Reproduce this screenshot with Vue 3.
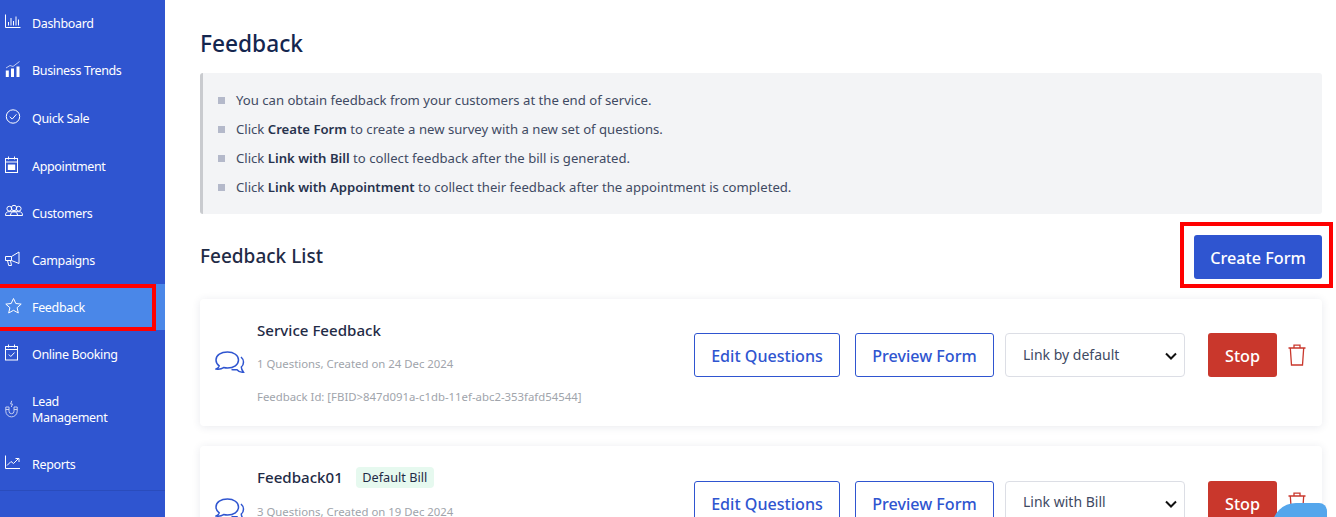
<script setup>
const nav = [
  { label: 'Dashboard', icon: 'dash', h: 47 },
  { label: 'Business Trends', icon: 'trend', h: 47 },
  { label: 'Quick Sale', icon: 'check', h: 49 },
  { label: 'Appointment', icon: 'cal', h: 47 },
  { label: 'Customers', icon: 'users', h: 47 },
  { label: 'Campaigns', icon: 'horn', h: 47 },
  { label: 'Feedback', icon: 'star', h: 46, active: true },
  { label: 'Online Booking', icon: 'book', h: 49 },
  { label: 'Lead Management', icon: 'magnet', h: 62 },
  { label: 'Reports', icon: 'report', h: 47 }
]
const forms = [
  { title: 'Service Feedback', meta: '1 Questions, Created on 24 Dec 2024', id: 'Feedback Id: [FBID>847d091a-c1db-11ef-abc2-353fafd54544]', link: 'Link by default' },
  { title: 'Feedback01', badge: 'Default Bill', meta: '3 Questions, Created on 19 Dec 2024', id: 'Feedback Id: [FBID>5a1d7e20-bd7a-11ef-9c41-353fafd54544]', link: 'Link with Bill' }
]
</script>

<template>
  <div class="page">
    <aside class="side">
      <div v-for="n in nav" :key="n.label" class="item" :class="{ active: n.active }" :style="{ height: n.h + 'px' }">
        <svg class="nicon" viewBox="0 0 18 18" fill="none" stroke="currentColor" stroke-width="1">
          <template v-if="n.icon === 'dash'">
            <path d="M.5 1.500V14.500H15.500" />
            <path d="M3.500 12.500V9M6 12.500V5M8.500 12.500V8M11 12.500V3.500M13.500 12.500V6.500" />
          </template>
          <template v-else-if="n.icon === 'trend'">
            <path d="M1 8 5 5.500l3 1 6.500-5" stroke-width=".7" />
            <path d="M.8 10.500h3V17h-3zM6 8.500h3V17H6zM11.500 6.500h3V17h-3z" fill="currentColor" stroke="none" />
          </template>
          <template v-else-if="n.icon === 'check'">
            <circle cx="8" cy="8.500" r="6.700" />
            <path d="M4.800 8.700 7.200 11.100 11.400 6.300" />
          </template>
          <template v-else-if="n.icon === 'cal'">
            <rect x=".5" y="2.500" width="12" height="14" />
            <path d="M.5 6h12M3.500 .5v3M9.500 .5v3" />
            <path d="M2.800 8.500h7.400v5.500H2.800z" fill="currentColor" stroke="none" />
          </template>
          <template v-else-if="n.icon === 'users'">
            <circle cx="9" cy="5" r="2.700" />
            <circle cx="4.300" cy="5.700" r="2.400" />
            <circle cx="13.700" cy="5.700" r="2.400" />
            <path d="M.5 12.500c0-2.800 1.200-3.800 3.500-3.800h10c2.300 0 3.500 1 3.500 3.800zM5.500 12.500c0-2.300 1.200-3.800 3.500-3.800s3.500 1.500 3.500 3.800" />
          </template>
          <template v-else-if="n.icon === 'horn'">
            <path d="M.5 6.500h6L14 2v11.500L6.500 10.500h-6zM6.500 6.500v4M2.500 10.500l1.200 5H6.500l-1-5" />
          </template>
          <template v-else-if="n.icon === 'star'">
            <path d="M8.500 1.500 10.800 6.500 16.200 7.100 12.100 10.700 13.300 16 8.500 13.300 3.700 16 4.900 10.700 .8 7.100 6.200 6.500Z" />
          </template>
          <template v-else-if="n.icon === 'book'">
            <rect x=".5" y="2.500" width="12" height="13.500" />
            <path d="M.5 5.500h12M3.500 .5v3M9.500 .5v3M3.800 10.500l2 2 3.800-4" />
          </template>
          <template v-else-if="n.icon === 'magnet'">
            <g opacity=".72">
              <path d="M.8 7v4.200a5.700 5.700 0 0 0 11.400 0V7H9v4.200a2.500 2.500 0 0 1-5 0V7zM.8 9.500H4M9 9.500h3.200" />
              <path d="M6.800 .8 5.600 4H7.500L6.300 7" />
            </g>
          </template>
          <template v-else>
            <path d="M.5 1.500V14.500H15" />
            <path d="M2 11.500 6 7.500l2.500 2 5-5M10.500 4.500h3.500V8" />
          </template>
        </svg>
        <span class="nlabel">{{ n.label }}</span>
      </div>
      <div class="side-rule"></div>
      <div class="mark side-mark"></div>
    </aside>

    <main class="main">
      <h1 class="title">Feedback</h1>
      <ul class="info">
        <li>You can obtain feedback from your customers at the end of service.</li>
        <li>Click <b>Create Form</b> to create a new survey with a new set of questions.</li>
        <li>Click <b>Link with Bill</b> to collect feedback after the bill is generated.</li>
        <li>Click <b>Link with Appointment</b> to collect their feedback after the appointment is completed.</li>
      </ul>

      <div class="list-head">
        <h2>Feedback List</h2>
        <button class="create">Create Form<span class="mark create-mark"></span></button>
      </div>

      <section v-for="f in forms" :key="f.title" class="card">
        <svg class="chat" viewBox="0 0 30 24" fill="none" stroke="#2f55d0" stroke-width="1.500">
          <path d="M12.500 1C6 1 1 4 1 9c0 2.700 1.400 4.600 3.200 5.900-.3 1.400-1.300 2.400-3 3.100 3.100.5 5.400 0 7.400-1.400 1.300.3 2.700.5 3.900.5 6.300 0 11-3.400 11-8.100S18.800 1 12.500 1Z" />
          <path d="M26 6c1.600 1.400 2.500 3 2.500 5 0 2.200-.8 3.900-2.200 5 0 1.900.8 3.400 2.200 5.200-2.500.4-5-.7-6.500-2.500-2.200.3-3.800.2-5.500-.2" />
        </svg>
        <div class="body">
          <div class="name">{{ f.title }}<span v-if="f.badge" class="badge">{{ f.badge }}</span></div>
          <div class="meta">{{ f.meta }}</div>
          <div class="meta id">{{ f.id }}</div>
        </div>
        <div class="actions">
          <button class="outline edit">Edit Questions</button>
          <button class="outline preview">Preview Form</button>
          <div class="select">
            <span>{{ f.link }}</span>
            <svg width="12" height="8" viewBox="0 0 12 8" fill="none" stroke="#111" stroke-width="2"><path d="M1 1.500 6 6.500 11 1.500" /></svg>
          </div>
          <button class="stop">Stop</button>
          <svg class="trash" viewBox="0 0 18 22" fill="none" stroke="#c9372c" stroke-width="1.300">
            <path d="M.5 4h17M6 4V1.200h6V4M2.300 4 3.500 21h11L15.700 4" />
          </svg>
        </div>
      </section>
    </main>
    <div class="bubble"></div>
  </div>
</template>

<style>
html, body { margin: 0; height: 517px; overflow: hidden; background: #fff; }
</style>

<style scoped>
.page { position: relative; display: flex; width: 1336px; height: 517px; overflow: hidden; font-family: "Noto Sans", "Open Sans", sans-serif; color: #1b2a4e; }
.side { position: relative; flex: 0 0 165px; background: #2f55d0; color: #fff; box-sizing: border-box; }
.item { display: flex; align-items: center; box-sizing: border-box; padding-left: 5px; font-size: 12.500px; line-height: 16px; letter-spacing: -.35px; }
.item.active { background: #4a87e8; }
.item.active .nlabel { margin-top: 1px; }
.nicon { flex: 0 0 18px; width: 18px; height: 18px; margin-right: 9px; margin-top: -3px; }
.nlabel { width: 100px; }
.side-rule { height: 1px; margin-top: 2px; background: #2a4cbc; }
.mark { position: absolute; border: 4px solid #f00; box-sizing: border-box; pointer-events: none; }
.side-mark { left: -4px; top: 284px; width: 160px; height: 47px; }

.main { flex: 1; min-width: 0; padding: 0 14px 0 35px; }
.title { margin: 28px 0 0; font-size: 22.700px; line-height: 32px; font-weight: 500; color: #14264f; }
.info { margin: 13px 0 0; padding: 13px 0 12px 33px; list-style: none; height: 141px; box-sizing: border-box; background: #f3f4f6; border-left: 3px solid #c9cbcf; border-radius: 3px; font-size: 13.140px; line-height: 29px; color: #3f4a63; }
.info li { position: relative; }
.info li::before { content: ""; position: absolute; left: -18px; top: 11px; width: 7px; height: 7px; background: #b4b9ca; }
.info b { font-weight: 600; color: #27324d; }

.list-head { display: flex; justify-content: space-between; align-items: center; height: 44px; margin-top: 21px; }
.list-head h2 { margin: -2px 0 0; font-size: 19px; font-weight: 500; color: #1f2b46; }
.create { position: relative; width: 128px; height: 44px; border: 0; border-radius: 3px; background: #2f55d0; color: #fff; font: 500 16.200px "Noto Sans", sans-serif; padding: 2px 0 0; }
.create-mark { left: -14px; top: -13px; width: 153px; height: 66px; }

.card { display: flex; align-items: center; height: 127px; margin-top: 20px; box-sizing: border-box; padding-left: 15px; background: #fff; border-radius: 4px; box-shadow: 0 1px 8px rgba(40, 50, 90, .1); }
.chat { flex: 0 0 30px; width: 30px; height: 24px; margin-right: 12px; }
.body { flex: 1; min-width: 0; }
.name { font-size: 15.100px; line-height: 20px; font-weight: 500; color: #1f2b46; display: flex; align-items: center; }
.badge { margin: 1px 0 0 13px; padding: 0 6.500px; height: 21px; line-height: 21px; border-radius: 4px; background: #e6f9ef; font-size: 12.700px; font-weight: 400; }
.meta { margin-top: 15px; font-size: 11.370px; line-height: 18px; color: #a0a4ab; }
.id { margin-top: 15px; }
.actions { display: flex; align-items: center; flex: 0 0 628px; box-sizing: border-box; padding-right: 15px; margin-top: -15px; }
.card:last-child .actions { margin-top: -13px; }
.card:last-child .select span { margin-top: -2px; }
.outline { height: 44px; box-sizing: border-box; border: 1px solid #2f55d0; border-radius: 3px; background: #fff; color: #2f55d0; font: 500 16.100px "Noto Sans", sans-serif; padding: 2px 0 0; }
.edit { width: 146px; margin-right: 15px; }
.preview { width: 139px; margin-right: 11px; }
.select { display: flex; align-items: center; justify-content: space-between; width: 180px; height: 44px; box-sizing: border-box; padding: 0 7px 2px 17px; border: 1px solid #dcdee5; border-radius: 4px; font-size: 14px; color: #3f4a63; margin-right: 23px; }
.select svg { margin-top: 4px; }
.stop { width: 69px; height: 44px; border: 0; border-radius: 3px; background: #c9372c; color: #fff; font: 500 16.200px "Noto Sans", sans-serif; padding: 2px 0 0; margin-right: 11px; }
.trash { width: 18px; height: 22px; margin-top: -1px; }
.bubble { position: absolute; left: 1272px; top: 503px; width: 55px; height: 40px; border-radius: 24px 8px 0 0; background: #54a6ec; }
</style>
